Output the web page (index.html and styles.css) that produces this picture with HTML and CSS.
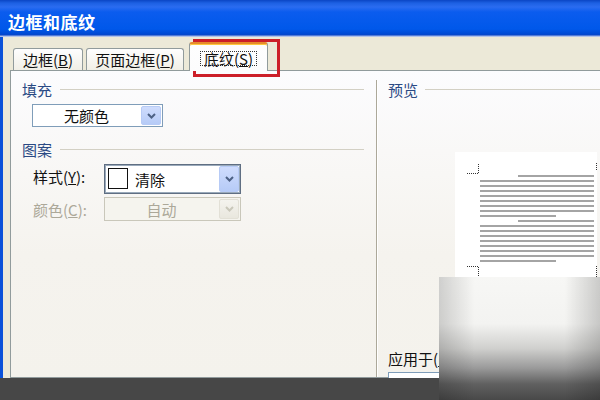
FILE: index.html
```html
<!DOCTYPE html>
<html lang="zh-CN">
<head>
    <meta charset="UTF-8">
    <title>边框和底纹</title>
    <link rel="stylesheet" href="styles.css">
</head>
<body>
    <div class="window">
        <div class="titlebar">边框和底纹</div>
        <div class="frame">
            <div class="client">
                <div class="tabs">
                    <div class="tab tab-b">边框(<u>B</u>)</div>
                    <div class="tab tab-p">页面边框(<u>P</u>)</div>
                    <div class="tab active"><span class="focus">底纹(<u>S</u>)</span></div>
                </div>
                <div class="panel">
                    <div class="col-left">
                        <div class="group-head first"><span>填充</span><i></i></div>
                        <div class="combo fill">
                            <span class="combo-text">无颜色</span>
                            <span class="drop"><svg width="9" height="6" viewBox="0 0 9 6"><path d="M1 1 L4.5 4.5 L8 1" fill="none" stroke="#4d6185" stroke-width="2"/></svg></span>
                        </div>
                        <div class="group-head second"><span>图案</span><i></i></div>
                        <div class="field-row">
                            <label>样式(<u>Y</u>):</label>
                            <div class="combo style">
                                <span class="swatch"></span>
                                <span class="combo-text">清除</span>
                                <span class="drop"><svg width="9" height="6" viewBox="0 0 9 6"><path d="M1 1 L4.5 4.5 L8 1" fill="none" stroke="#4d6185" stroke-width="2"/></svg></span>
                            </div>
                        </div>
                        <div class="field-row disabled">
                            <label>颜色(<u>C</u>):</label>
                            <div class="combo color">
                                <span class="combo-text centered">自动</span>
                                <span class="drop"><svg width="9" height="6" viewBox="0 0 9 6"><path d="M1 1 L4.5 4.5 L8 1" fill="none" stroke="#c9c7ba" stroke-width="2"/></svg></span>
                            </div>
                        </div>
                    </div>
                    <div class="sep"></div>
                    <div class="col-right">
                        <div class="group-head first preview-head"><span>预览</span><i></i></div>
                        <div class="page">
                            <svg width="142" height="125" viewBox="0 0 142 125">
                                <g stroke="#333" stroke-width="1" stroke-dasharray="1 1" fill="none">
                                    <path d="M12 21.5 H23.5 V11"/>
                                    <path d="M141.5 11 V18"/>
                                    <path d="M12 114.5 H23.5 V125"/>
                                    <path d="M141.5 114 V125"/>
                                </g>
                                <g stroke="#a4a4a4" stroke-width="2">
                                    <path d="M63 24 H139"/>
                                    <path d="M25 29 H139 M25 34 H139 M25 39 H139 M25 44 H139 M25 49 H139 M25 54 H139 M25 59 H139"/>
                                    <path d="M25 64 H101"/>
                                    <path d="M63 69 H139"/>
                                    <path d="M25 74 H139 M25 79 H139 M25 84 H139 M25 89 H139 M25 94 H139 M25 99 H139 M25 104 H139"/>
                                    <path d="M25 109 H101"/>
                                </g>
                            </svg>
                        </div>
                        <div class="apply">应用于(<u>L</u>):</div>
                        <div class="apply-box"></div>
                    </div>
                </div>
            </div>
        </div>
    </div>
    <div class="bottom-bar"></div>

    <div class="mark"></div>
    <div class="shade"></div>
</body>
</html>
```

FILE: styles.css
```css
body {
    margin: 0;
    width: 600px;
    height: 400px;
    overflow: hidden;
    position: relative;
    display: flex;
    flex-direction: column;
    font-family: "Noto Sans CJK SC", sans-serif;
    font-size: 15px;
    color: #111111;
    background-color: #474747;
}

u {
    text-decoration: underline;
    text-underline-offset: 1px;
}

.window {
    height: 378px;
    flex: none;
    display: flex;
    flex-direction: column;
    overflow: hidden;
}

.titlebar {
    height: 37px;
    flex: none;
    box-sizing: border-box;
    padding: 5px 0 0 8px;
    display: flex;
    align-items: center;
    color: #ffffff;
    font-size: 17px;
    font-weight: bold;
    letter-spacing: 0.5px;
    background: linear-gradient(#0a45c4 0, #1c60e2 3px, #2a6cf0 7px, #0b5cee 12px, #0058ea 29px, #0049d2 34px, #0a46c8 35px, #9db3e6 36px, #c7d3ee 37px);
}

.frame {
    flex: 1;
    min-height: 0;
    display: flex;
    border-left: 3px solid #0b52d9;
    background-color: #ece9d8;
}

.client {
    flex: 1;
    min-height: 0;
    display: flex;
    flex-direction: column;
    padding-left: 7px;
}

.tabs {
    height: 33px;
    flex: none;
    display: flex;
    align-items: flex-end;
    gap: 3px;
    padding-left: 3px;
}

.tab {
    height: 22px;
    box-sizing: border-box;
    display: flex;
    align-items: center;
    justify-content: center;
    border: 1px solid #919b9c;
    border-bottom: none;
    border-radius: 3px 3px 0 0;
    background: linear-gradient(#fefefe, #f1efe6);
    line-height: 16px;
}

.tab-b {
    width: 70px;
}

.tab-p {
    width: 98px;
}

.tab.active {
    width: 79px;
    height: 29px;
    margin-left: 2px;
    margin-bottom: -1px;
    position: relative;
    z-index: 2;
    border-top: 2px solid #e68b2c;
    box-shadow: inset 0 1px 0 #ffc83c;
    background: linear-gradient(#fefefe, #fcfcfd);
    padding-top: 2px;
}

.focus {
    border: 1px dotted #333333;
    padding: 0 3px;
    line-height: 13px;
}

.panel {
    flex: 1;
    min-height: 0;
    display: flex;
    border: 1px solid #919b9c;
    border-right: none;
    background: linear-gradient(#fcfcfe, #f5f3ee 60%, #f4f2ec);
}

.col-left {
    width: 365px;
    flex: none;
    box-sizing: border-box;
    padding: 0 12px 0 11px;
}

.group-head {
    height: 18px;
    display: flex;
    align-items: center;
    gap: 8px;
    color: #2a4a84;
}

.group-head i {
    flex: 1;
    height: 1px;
    background-color: #d3d0c4;
}

.group-head.first {
    margin-top: 9px;
}

.group-head.second {
    margin-top: 13px;
}

.preview-head {
    gap: 7px;
}

.combo {
    display: flex;
    align-items: stretch;
    box-sizing: border-box;
    background-color: #ffffff;
    border: 1px solid #7f9db9;
}

.combo-text {
    flex: 1;
    display: flex;
    align-items: center;
}

.combo-text.centered {
    justify-content: center;
}

.drop {
    width: 18px;
    margin: 1px;
    display: flex;
    align-items: center;
    justify-content: center;
    border-radius: 2px;
    border: 1px solid #b7cbf6;
    background: linear-gradient(#cfdcfd, #b6cbf7);
}

.combo.fill {
    width: 131px;
    height: 23px;
    margin: 6px 0 0 10px;
}

.combo.fill .combo-text {
    justify-content: center;
}

.field-row {
    display: flex;
    align-items: center;
    padding-left: 11px;
}

.field-row label {
    width: 71px;
    flex: none;
}

.combo.style {
    width: 137px;
    height: 30px;
    margin-top: 6px;
    border-color: #5f6e82;
    box-shadow: inset 0 0 0 1px #9aaabb;
}

.swatch {
    width: 18px;
    height: 19px;
    margin: 3px 7px 0 3px;
    border: 1px solid #111111;
    background-color: #ffffff;
    flex: none;
}

.disabled {
    margin-top: 3px;
    color: #aca899;
}

.combo.color {
    width: 137px;
    height: 24px;
    border-color: #c9c7ba;
    background-color: #f5f4ee;
}

.combo.color .drop {
    border-color: #e2e0d6;
    background: linear-gradient(#f4f3ee, #e9e7de);
}

.sep {
    width: 1px;
    margin-top: 9px;
    border-left: 1px solid #aca899;
    background-color: #ffffff;
    flex: none;
}

.col-right {
    flex: 1;
    padding-left: 10px;
}

.page {
    width: 142px;
    height: 125px;
    margin: 54px 0 0 67px;
    background-color: #ffffff;
}

.page svg {
    display: block;
}

.apply {
    margin-top: 73px;
    line-height: 18px;
}

.apply-box {
    width: 200px;
    height: 22px;
    margin-top: 4px;
    border: 1px solid #7f9db9;
    background-color: #ffffff;
}

.bottom-bar {
    flex: 1;
    background-color: #474747;
}

/* red annotation box round the selected tab */
.mark {
    position: absolute;
    left: 193px;
    top: 39px;
    width: 87px;
    height: 38px;
    box-sizing: border-box;
    border: 3px solid #cc1f29;
}

/* photo vignette lying over the bottom right corner */
.shade {
    position: absolute;
    left: 439px;
    top: 277px;
    right: 0;
    bottom: 0;
    background:
        linear-gradient(to right, rgba(0, 0, 0, 0.16) 0, rgba(0, 0, 0, 0) 22%, rgba(0, 0, 0, 0) 78%, rgba(0, 0, 0, 0.18) 100%),
        linear-gradient(#f7f7f5 0, #f3f3f1 38%, #d0d0ce 58%, #9a9a9a 74%, #606060 87%, #484848 100%);
}
```
